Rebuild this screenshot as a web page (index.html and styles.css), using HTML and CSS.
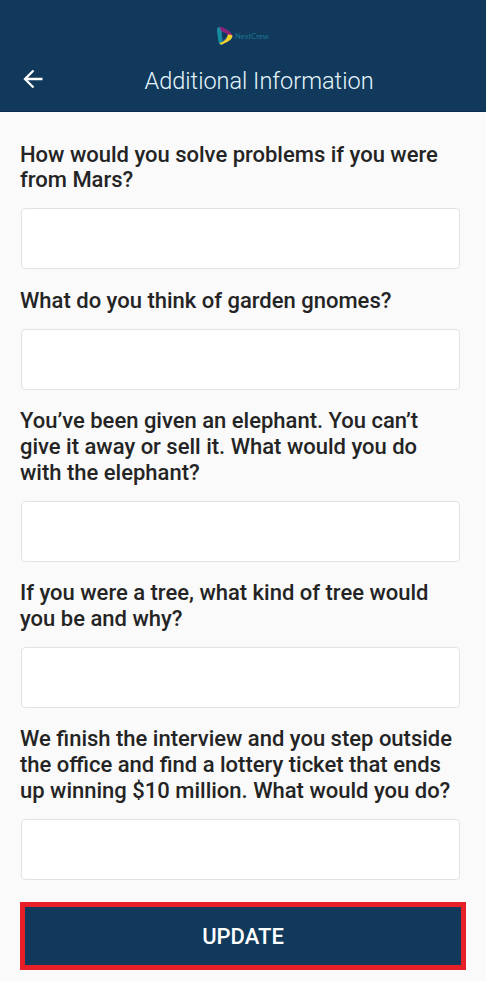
FILE: index.html
```html
<!DOCTYPE html>
<html lang="en">
<head>
<meta charset="utf-8">
<meta name="viewport" content="width=device-width, initial-scale=1">
<title>Additional Information</title>
<link rel="stylesheet" href="styles.css">
</head>
<body>
<header class="header">
  <div class="logo">
    <svg class="logo-mark" viewBox="0 0 18 20" width="18" height="20">
      <path d="M1 4 Q1 0 5 1 Q11 3 15 7 Q17 9 16.500 11 Q16 13 12 15.500 L6 18.500 Q3 19.500 2.500 15 Z" fill="#28549a"/>
      <path d="M3 1 Q5 0 8 2 L14 6 Q16.500 8 16.500 10 L12 10.500 Q11 6 4 5 Z" fill="#8c2078"/>
      <path d="M1 4 Q1 1.500 3 1 Q6 4 5.500 9 Q5.500 14 7.500 18 Q4 20 2.500 16 Z" fill="#168c9f"/>
      <path d="M16.500 10 Q16 13 12 15.500 L6 18.500 Q4 19 3.500 17 Q10 16 12 8.500 Q16 8 16.500 10 Z" fill="#f0d226"/>
      <path d="M6 6 Q10 6.500 11.500 9 Q10.500 12.500 7 14 Q5.500 10 6 6 Z" fill="#123958"/>
    </svg>
    <span class="logo-text">NextCrew</span>
  </div>
  <div class="bar">
    <a href="#" class="back" aria-label="Back">
      <svg viewBox="0 0 20 20" width="20" height="20">
        <path d="M19.500 10 H2 M10.500 1.500 L2 10 L10.500 18.500" fill="none" stroke="#fff" stroke-width="2.300"/>
      </svg>
    </a>
    <h1 class="title">Additional Information</h1>
  </div>
</header>

<form class="form">
  <label class="question" for="q1">How would you solve problems if you were<br>from Mars?</label>
  <input class="answer" id="q1" type="text">

  <label class="question" for="q2">What do you think of garden gnomes?</label>
  <input class="answer" id="q2" type="text">

  <label class="question" for="q3">You’ve been given an elephant. You can’t<br>give it away or sell it. What would you do<br>with the elephant?</label>
  <input class="answer" id="q3" type="text">

  <label class="question" for="q4">If you were a tree, what kind of tree would<br>you be and why?</label>
  <input class="answer" id="q4" type="text">

  <label class="question" for="q5">We finish the interview and you step outside<br>the office and find a lottery ticket that ends<br>up winning $10 million. What would you do?</label>
  <input class="answer" id="q5" type="text">

  <button class="update" type="button">UPDATE</button>
</form>
</body>
</html>
```
FILE: styles.css
```css
* {box-sizing: border-box;}
body {margin: 0; background-color: #fafafa; font-family: Roboto, sans-serif; color: #242424;}

.header {height: 112px; padding-top: 26px; background-color: #10395b; border-bottom: 1px solid #0b2c4b;}
.logo {display: flex; align-items: center; height: 20px; padding-left: 216px;}
.logo-text {margin-left: 1px; font-family: Lato, sans-serif; font-size: 7.600px; color: #1e7595;}
.bar {display: flex; align-items: center; height: 32px; margin-top: 17px;}
.back {display: flex; margin-left: 23px; margin-top: -1px;}
.title {margin: 3px 0 0 101.500px; font-size: 23.500px; line-height: 30px; font-weight: 300; color: #e6f5fb; white-space: nowrap;}

.form {display: flex; flex-direction: column; padding: 11.100px 20px 0;}
.question {margin: 18.600px 0 15.400px; font-size: 22px; line-height: 25.600px; font-weight: 500; white-space: nowrap;}
.answer {width: 439px; height: 61px; margin: 0 0 0 1px; padding: 0 14px; border: 1px solid #e3e3e3; border-radius: 4px; background-color: #fff; font: 400 20px Roboto, sans-serif;}
.update {width: 446px; height: 68px; margin-top: 22px; border: 5px solid #e81f29; padding: 1px 0 0; background-color: #10395b; color: #fff; font: 500 22px Roboto, sans-serif;}
```
